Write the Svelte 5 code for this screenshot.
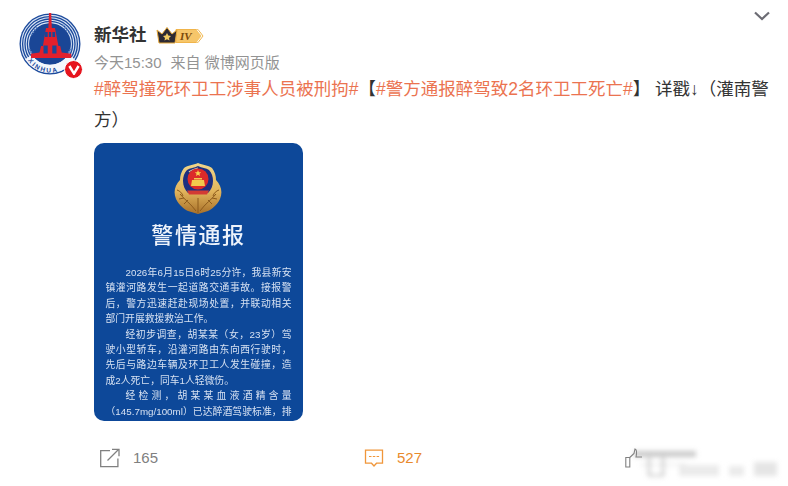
<script>
  const lines = [
    { t: '2026年6月15日6时25分许，我县新安', indent: true },
    { t: '镇灌河路发生一起道路交通事故。接报警' },
    { t: '后，警方迅速赶赴现场处置，并联动相关' },
    { t: '部门开展救援救治工作。', end: true },
    { t: '经初步调查，胡某某（女，23岁）驾', indent: true },
    { t: '驶小型轿车，沿灌河路由东向西行驶时，' },
    { t: '先后与路边车辆及环卫工人发生碰撞，造' },
    { t: '成2人死亡，同车1人轻微伤。', end: true },
    { t: '经检测，胡某某血液酒精含量', indent: true },
    { t: '（145.7mg/100ml）已达醉酒驾驶标准，排' }
  ];
  const rings = [28.6, 26.2, 23.8, 21.4];
  const smears = [
    { x: -6, y: 3, w: 62, h: 6, o: 0.45 },
    { x: 0, y: 15, w: 46, h: 3, o: 0.1 },
    { x: 7, y: 9, w: 4, h: 19, o: 0.28 },
    { x: 21, y: 9, w: 4, h: 19, o: 0.28 },
    { x: 9, y: 26, w: 14, h: 3, o: 0.3 },
    { x: 39, y: 17, w: 40, h: 11, o: 0.17 },
    { x: 89, y: 18, w: 15, h: 10, o: 0.17 },
    { x: 114, y: 14, w: 23, h: 14, o: 0.22 }
  ];
</script>

<div class="page">
  <button class="more" aria-label="更多">
    <svg width="18" height="10" viewBox="0 0 18 10"><path d="M2 1.500 9 8l7-6.500" fill="none" stroke="#6c6c74" stroke-width="2.200"/></svg>
  </button>

  <header class="head">
    <div class="avatar">
      <svg width="62" height="62" viewBox="0 0 62 62">
        <circle cx="31" cy="31" r="30.500" fill="#1c4a9c"/>
        {#each rings as r}
          <circle cx="31" cy="31" {r} fill="none" stroke="#dbe6f5" stroke-width="1.100"/>
        {/each}
        <circle cx="31" cy="31" r="20.500" fill="#1a4696"/>
        <path d="M12 22l6-8M44 12l6 8M10 36l4 6M52 36l-4 6" stroke="#5f86c4" stroke-width="2" stroke-dasharray="1.500 1.500"/>
        <path d="M9.500 44a25.500 25.500 0 0 0 43 0" fill="none" stroke="#f4f7fc" stroke-width="8"/>
        <path d="M30 0h2.200l.6 15h3.200l3.400 18h1.800l1.600 6.500 9.500 1.200V45H12v-4.300l8.500-1.200 1.600-6.500h1.800L27 15h2.400z" fill="#e1202c"/>
        <path d="M26 19h2.700v5H26zM29.900 19h2.300v5h-2.300zM33.400 19h2.700v5h-2.700zM24.500 32.500h4.200v8h-4.200zM33.300 32.500h4.200v8h-4.200z" fill="#1a4696"/>
        <path id="xh" d="M9 47.500a26 26 0 0 0 44 0" fill="none"/>
        <text class="xh"><textPath href="#xh">XINHUA</textPath></text>
      </svg>
      <span class="vbadge">
        <svg width="12" height="10" viewBox="0 0 12 10"><path d="M1.400 1 6 8.600 10.600 1" fill="none" stroke="#fff" stroke-width="2.500"/></svg>
      </span>
    </div>
    <div class="meta">
      <div class="name-row">
        <span class="name">新华社</span>
        <svg class="rank" width="48" height="17" viewBox="0 0 48 17">
          <path d="M20 2.500h22l5 6.500-5 6.500H20z" fill="#f6c66a" stroke="#f0b44a" stroke-width="1"/>
          <path d="M41 2.500 46 9l-5 6.500" fill="none" stroke="#fff" stroke-width="1"/>
          <text x="24" y="13" class="iv">IV</text>
          <path d="M1 3l5 4 5-6.500 5 6.500 5-4-2 13H3z" fill="#2d2a33" stroke="#e7a93b" stroke-width="1"/>
          <path d="M11 6l1.300 2.600 2.700.4-2 1.900.5 2.700L11 12.300 8.500 13.600 9 10.900 7 9l2.700-.4z" fill="#f3cc63"/>
        </svg>
      </div>
      <div class="sub"><span>今天15:30</span><span>来自 微博网页版</span></div>
    </div>
  </header>

  <div class="body">
    <p class="text"><span class="tag">#醉驾撞死环卫工涉事人员被刑拘#</span>【<span class="tag">#警方通报醉驾致2名环卫工死亡#</span>】 详戳↓（灌南警方）</p>

    <div class="notice">
      <svg class="emblem" width="50" height="52" viewBox="0 0 50 52">
        <defs>
          <linearGradient id="gold" x1="0" y1="0" x2="0" y2="1">
            <stop offset="0" stop-color="#f0d68a"/>
            <stop offset="0.55" stop-color="#e2b55c"/>
            <stop offset="1" stop-color="#a8702a"/>
          </linearGradient>
        </defs>
        <path d="M24 0c5 2 10 2 14 5 3 4 4 8 4 12 5 5 7 12 4 19-3 6-8 10-12 12l-10 3-10-3C10 46 5 42 2 36-1 29 1 22 6 17c0-4 1-8 4-12 4-3 9-3 14-5z" fill="url(#gold)"/>
        <path d="M24 3c4 2 8 2 11 4 3 3 4 7 4 11 0 5-2 9-5 12H14c-3-3-5-7-5-12 0-4 1-8 4-11 3-2 7-2 11-4z" fill="#1d2f80"/>
        <path d="M24 5c-4 1-7 2-9 4" stroke="#d9c7a0" stroke-width="1.200" fill="none"/>
        <circle cx="24" cy="16" r="10.500" fill="#dc2a2a"/>
        <path d="M24 7l.9 2.300h2.400l-1.900 1.500.7 2.300-2.100-1.400-2.100 1.400.7-2.300-1.900-1.500h2.400z" fill="#f6d24e"/>
        <path d="M17 23l1-6h12l1 6zM20 16.500v-1.500h8v1.500z" fill="#f2c94d"/>
        <path d="M13 27.500h22l-2 4H15z" fill="#d33a34"/>
        <path d="M24 35v15M6 31c4 5 11 10 16 17M42 31c-4 5-11 10-16 17M3 27c3 1 5 3 6 6M45 27c-3 1-5 3-6 6M10 41l4-4M38 41l-4-4M5 36l5-1M43 36l-5-1" stroke="#8c5a1c" stroke-width="1" fill="none"/>
      </svg>
      <div class="title">警情通报</div>
      <div class="lines">
        {#each lines as l}
          <div class="line" class:indent={l.indent} class:end={l.end}>{l.t}</div>
        {/each}
      </div>
    </div>
  </div>

  <footer class="actions">
    <div class="act act-share">
      <svg width="22" height="20" viewBox="0 0 22 20" fill="none" stroke="#808080" stroke-width="1.300">
        <path d="M11 2.600H1.700v16h17.200V10.500"/>
        <path d="M8.500 12.500 19 2M13 1.300h7v7"/>
      </svg>
      <span>165</span>
    </div>
    <div class="act act-comment">
      <svg width="20" height="20" viewBox="0 0 20 20" fill="none" stroke="#f0963a" stroke-width="1.300">
        <path d="M1.500 2.200h17v13h-6L10 18l-2.500-2.800h-6z"/>
        <path d="M5 8.500h2.500M8.800 8.500h2.500M12.600 8.500h2.500" stroke-width="1"/>
      </svg>
      <span>527</span>
    </div>
    <div class="act act-like">
      <svg width="18" height="20" viewBox="0 0 18 20" fill="none" stroke="#808080" stroke-width="1.100">
        <path d="M.8 9.500h4V19h-4zM4.800 9.500 9 5.500l1-4.500c2 .5 2 3 1 8h6"/>
      </svg>
      <div class="smear" aria-hidden="true">
        {#each smears as s}
          <i style="left:{s.x}px;top:{s.y}px;width:{s.w}px;height:{s.h}px;opacity:{s.o}"></i>
        {/each}
      </div>
    </div>
  </footer>
</div>

<style>
  :global(body) { margin: 0; background: #fff; }
  .page {
    position: relative;
    box-sizing: border-box;
    width: 788px;
    height: 486px;
    overflow: hidden;
    padding: 13px 0 0 19px;
    background: #fff;
    color: #333;
    font-family: "Liberation Sans", "Noto Sans CJK SC", sans-serif;
  }
  .more {
    position: absolute;
    top: 11px;
    right: 17px;
    padding: 0;
    border: 0;
    background: none;
    line-height: 0;
  }
  .head { display: flex; gap: 13px; }
  .avatar { position: relative; width: 62px; height: 62px; line-height: 0; }
  .xh { font: 700 6.500px "Liberation Sans", sans-serif; fill: #1c4a9c; letter-spacing: 1.700px; }
  .vbadge {
    position: absolute;
    right: -2px;
    bottom: -4px;
    box-sizing: border-box;
    width: 19px;
    height: 19px;
    display: flex;
    align-items: center;
    justify-content: center;
    border-radius: 50%;
    background: #e6141e;
    border: 1.500px solid #fff;
  }
  .meta { padding-top: 10px; }
  .name-row { display: flex; align-items: center; gap: 9px; height: 24px; }
  .name { font-size: 17.500px; font-weight: 700; color: #333; line-height: 24px; }
  .iv { font: italic 700 11px "Liberation Serif", serif; fill: #7c4a0c; }
  .sub {
    display: flex;
    gap: 9px;
    margin-top: 6px;
    font-size: 15px;
    line-height: 20px;
    color: #939393;
  }
  .body { margin: 0 0 0 75px; }
  .text {
    width: 680px;
    margin: -1px 0 0;
    font-size: 17.500px;
    line-height: 31px;
    color: #333;
  }
  .tag { color: #eb7350; }
  .notice {
    box-sizing: border-box;
    width: 209px;
    height: 278px;
    margin-top: 7px;
    padding-top: 20px;
    overflow: hidden;
    border-radius: 10px;
    background: #0d4899;
    display: flex;
    flex-direction: column;
    align-items: center;
  }
  .emblem { display: block; flex: none; }
  .title {
    flex: none;
    margin-top: 6px;
    font-size: 22px;
    font-weight: 500;
    line-height: 30px;
    letter-spacing: 1.600px;
    color: #eef3fb;
    filter: blur(0.3px);
  }
  .lines {
    flex: none;
    width: 186px;
    margin-top: 14px;
    font-size: 9.800px;
    line-height: 15.400px;
    color: #d6e1f2;
    filter: blur(0.4px);
  }
  .line { text-align: justify; text-align-last: justify; white-space: nowrap; }
  .line.indent { padding-left: 20px; }
  .line.end { text-align-last: left; }
  .actions {
    display: flex;
    margin: 27px 0 0 80px;
    font-size: 15px;
    line-height: 20px;
  }
  .act { display: flex; align-items: center; gap: 12px; }
  .act svg { flex: none; display: block; }
  .act-share { width: 265px; color: #808080; }
  .act-comment { width: 261px; gap: 13px; color: #e98a2c; }
  .act-like { position: relative; width: 150px; }
  .smear {
    position: absolute;
    left: 15px;
    top: 0;
    width: 140px;
    height: 28px;
    filter: blur(2.500px);
  }
  .smear i { position: absolute; background: #8a8a8a; }
</style>
